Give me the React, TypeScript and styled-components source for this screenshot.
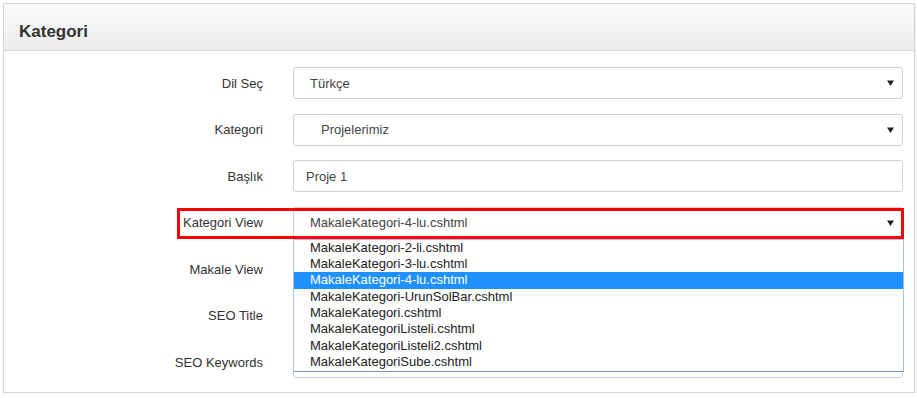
import { createGlobalStyle, styled } from 'styled-components';

const GlobalStyle = createGlobalStyle`
  body {
    margin: 0;
    background: #fff;
    font-family: 'Liberation Sans', Arial, sans-serif;
    color: #333;
  }
`;

const viewOptions = [
  'MakaleKategori-2-li.cshtml',
  'MakaleKategori-3-lu.cshtml',
  'MakaleKategori-4-lu.cshtml',
  'MakaleKategori-UrunSolBar.cshtml',
  'MakaleKategori.cshtml',
  'MakaleKategoriListeli.cshtml',
  'MakaleKategoriListeli2.cshtml',
  'MakaleKategoriSube.cshtml',
];

const Arrow = () => (
  <svg width="7" height="6" viewBox="0 0 7 6">
    <polygon points="0,0.5 7,0.5 3.5,6" fill="#222" />
  </svg>
);

const App = () => {
  return (
    <Page>
      <GlobalStyle />
      <Panel>
        <PanelHeading>
          <Title>Kategori</Title>
        </PanelHeading>
        <FormBody>
          <FormRow>
            <Label>Dil Seç</Label>
            <Field $indent={16}>
              <span>Türkçe</span>
              <Arrow />
            </Field>
          </FormRow>
          <FormRow>
            <Label>Kategori</Label>
            <Field $indent={27}>
              <span>Projelerimiz</span>
              <Arrow />
            </Field>
          </FormRow>
          <FormRow>
            <Label>Başlık</Label>
            <Field $indent={12}>
              <span>Proje 1</span>
            </Field>
          </FormRow>
          <FormRow $marked>
            <Label>Kategori View</Label>
            <Field $indent={16}>
              <span>MakaleKategori-4-lu.cshtml</span>
              <Arrow />
            </Field>
            <OptionList>
              {viewOptions.map((o) => (
                <Option key={o} $active={o === 'MakaleKategori-4-lu.cshtml'}>
                  {o}
                </Option>
              ))}
            </OptionList>
          </FormRow>
          <FormRow>
            <Label>Makale View</Label>
            <Field $indent={16} />
          </FormRow>
          <FormRow>
            <Label>SEO Title</Label>
            <Field $indent={12} />
          </FormRow>
          <FormRow>
            <Label>SEO Keywords</Label>
            <Field $indent={12} />
          </FormRow>
        </FormBody>
      </Panel>
    </Page>
  );
};

export default App;

const Page = styled.div`
  padding: 3px 0 0 3px;
`;

const Panel = styled.section`
  box-sizing: border-box;
  width: 912px;
  height: 390px;
  border: 1px solid #d4d4d4;
  box-shadow: 1px 2px 2px rgba(0, 0, 0, 0.08);
  background: #fff;
`;

const PanelHeading = styled.div`
  box-sizing: border-box;
  height: 47px;
  padding: 18px 15px 0;
  border-bottom: 1px solid #d9d9d9;
  background: linear-gradient(#fbfbfb, #ececec);
`;

const Title = styled.h3`
  margin: 0;
  font-size: 17px;
  line-height: 20px;
  font-weight: bold;
  color: #333;
`;

const FormBody = styled.div`
  display: flex;
  flex-direction: column;
  gap: 14.5px;
  padding-top: 16px;
`;

const FormRow = styled.div<{ $marked?: boolean }>`
  position: relative;
  display: grid;
  grid-template-columns: 259px 610px;
  column-gap: 30px;
  height: 32px;
  align-items: center;

  ${(p) =>
    p.$marked &&
    `
    &::after {
      content: '';
      position: absolute;
      top: 1px;
      left: 173px;
      width: 727px;
      height: 31px;
      box-sizing: border-box;
      border: 3px solid #ff0000;
      z-index: 3;
    }
  `}
`;

const Label = styled.label`
  text-align: right;
  font-size: 13px;
  color: #333;
`;

const Field = styled.div<{ $indent: number }>`
  box-sizing: border-box;
  height: 32px;
  display: flex;
  align-items: center;
  justify-content: space-between;
  padding: 0 8px 0 ${(p) => p.$indent}px;
  border: 1px solid #cfcfcf;
  border-radius: 3px;
  font-size: 13px;
  color: #444;
`;

const OptionList = styled.ul`
  position: absolute;
  top: 32px;
  left: 289px;
  width: 609px;
  margin: 0;
  padding: 0;
  list-style: none;
  background: #fff;
  border: 1px solid #a9bfe6;
  border-bottom-color: #7196d8;
  z-index: 2;
`;

const Option = styled.li<{ $active?: boolean }>`
  height: 16.4px;
  line-height: 16.4px;
  padding-left: 16px;
  font-size: 13px;
  white-space: nowrap;
  background: ${(p) => (p.$active ? '#1e90ff' : 'transparent')};
  color: ${(p) => (p.$active ? '#fff' : '#222')};
`;
